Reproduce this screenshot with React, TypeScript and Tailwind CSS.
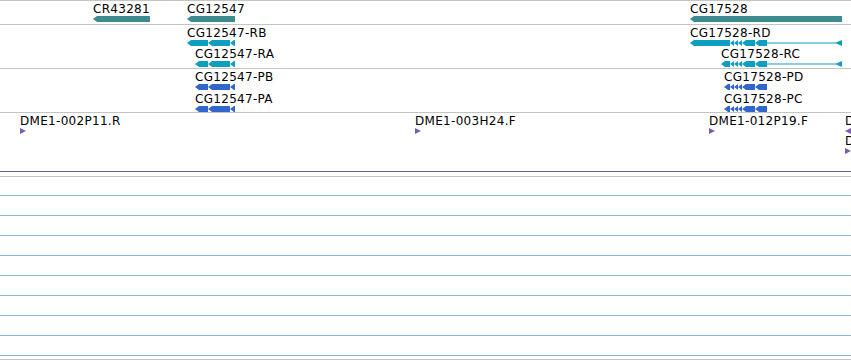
import React from "react"

const TEAL = "#3d8b8e"
const CYAN = "#0e9fc0"
const BLUE = "#3366cc"
const PURPLE = "#7b5cb0"

type Seg = [number, number]

// one exon chunk: left-pointing tip, then full height to the end
function chunk(a: number, b: number, h: number) {
  const tip = Math.min(4, b - a)
  return `${a},${h / 2} ${a + tip},0 ${b},0 ${b},${h} ${a + tip},${h}`
}

function Glyph({ start, segs, color, tail }: { start: number; segs: Seg[]; color: string; tail?: number }) {
  const h = 6
  const end = tail ?? segs[segs.length - 1][1]
  const w = end - start
  const lastExon = segs[segs.length - 1][1]
  return (
    <svg width={w} height={h} className="block">
      {segs.map(([a, b], i) => (
        <polygon key={i} points={chunk(a - start, b - start, h)} fill={color} />
      ))}
      {tail && (
        <>
          <line x1={lastExon - start} y1={h / 2} x2={w - 6} y2={h / 2} stroke={color} strokeWidth={1} />
          <polygon points={`${w - 7},${h / 2} ${w},0 ${w},${h}`} fill={color} />
        </>
      )}
    </svg>
  )
}

function Feature({ x, top, label, children }: { x: number; top: number; label: string; children: React.ReactNode }) {
  return (
    <div className="absolute flex flex-col" style={{ left: x, top }}>
      <span className="h-[13px] leading-none whitespace-nowrap tracking-[0.3px]">{label}</span>
      {children}
    </div>
  )
}

const cg12547: (s: number) => Seg[] = (s) => [[s, 208], [208, 230], [230, 235]]
const cg17528: (s: number) => Seg[] = (s) => [[s, 730], [730, 734], [734, 738], [738, 742], [742, 755], [755, 767]]

function Marker({ dir }: { dir: "r" | "l" }) {
  return (
    <svg width={6} height={6} className="block">
      <polygon points={dir === "r" ? "0,0 6,3 0,6" : "6,0 0,3 6,6"} fill={PURPLE} />
    </svg>
  )
}

export default function App() {
  return (
    <div className="w-[851px] h-[360px] bg-white overflow-hidden text-[12px] text-black font-['DejaVu_Sans',sans-serif]">
      {/* genes */}
      <div className="relative h-[24px] border-t border-[#c4c4c4]">
        <Feature x={93} top={2} label="CR43281">
          <Glyph start={93} segs={[[93, 150]]} color={TEAL} />
        </Feature>
        <Feature x={187} top={2} label="CG12547">
          <Glyph start={187} segs={[[187, 235]]} color={TEAL} />
        </Feature>
        <Feature x={690} top={2} label="CG17528">
          <Glyph start={690} segs={[[690, 842]]} color={TEAL} />
        </Feature>
      </div>

      {/* transcripts */}
      <div className="relative h-[44px] border-t border-[#c4c4c4]">
        <Feature x={187} top={2} label="CG12547-RB">
          <Glyph start={187} segs={cg12547(187)} color={CYAN} />
        </Feature>
        <Feature x={195} top={23} label="CG12547-RA">
          <Glyph start={195} segs={cg12547(195)} color={CYAN} />
        </Feature>
        <Feature x={690} top={2} label="CG17528-RD">
          <Glyph start={690} segs={cg17528(690)} color={CYAN} tail={842} />
        </Feature>
        <Feature x={721} top={23} label="CG17528-RC">
          <Glyph start={721} segs={cg17528(721)} color={CYAN} tail={842} />
        </Feature>
      </div>

      {/* proteins */}
      <div className="relative h-[44px] border-t border-[#c4c4c4]">
        <Feature x={195} top={2} label="CG12547-PB">
          <Glyph start={195} segs={cg12547(195)} color={BLUE} />
        </Feature>
        <Feature x={195} top={24} label="CG12547-PA">
          <Glyph start={195} segs={cg12547(195)} color={BLUE} />
        </Feature>
        <Feature x={724} top={2} label="CG17528-PD">
          <Glyph start={724} segs={cg17528(724)} color={BLUE} />
        </Feature>
        <Feature x={724} top={24} label="CG17528-PC">
          <Glyph start={724} segs={cg17528(724)} color={BLUE} />
        </Feature>
      </div>

      {/* clones */}
      <div className="relative h-[60px] border-t border-[#c4c4c4] border-b border-b-[#6e5a9e]">
        <Feature x={20} top={2} label="DME1-002P11.R">
          <Marker dir="r" />
        </Feature>
        <Feature x={415} top={2} label="DME1-003H24.F">
          <Marker dir="r" />
        </Feature>
        <Feature x={709} top={2} label="DME1-012P19.F">
          <Marker dir="r" />
        </Feature>
        <Feature x={845} top={2} label="DME1">
          <Marker dir="l" />
        </Feature>
        <Feature x={845} top={22} label="DME1">
          <Marker dir="r" />
        </Feature>
      </div>

      {/* empty plot */}
      <div className="mt-[4px] h-[19px] border-t border-[#c4c4c4]" />
      {Array.from({ length: 8 }).map((_, i) => (
        <div key={i} className="h-[20px] border-t border-[#8cb4d4]" />
      ))}
      <div className="h-[4px] border-t border-[#8cb4d4]" />
      <div className="border-t border-[#c4c4c4]" />
    </div>
  )
}
